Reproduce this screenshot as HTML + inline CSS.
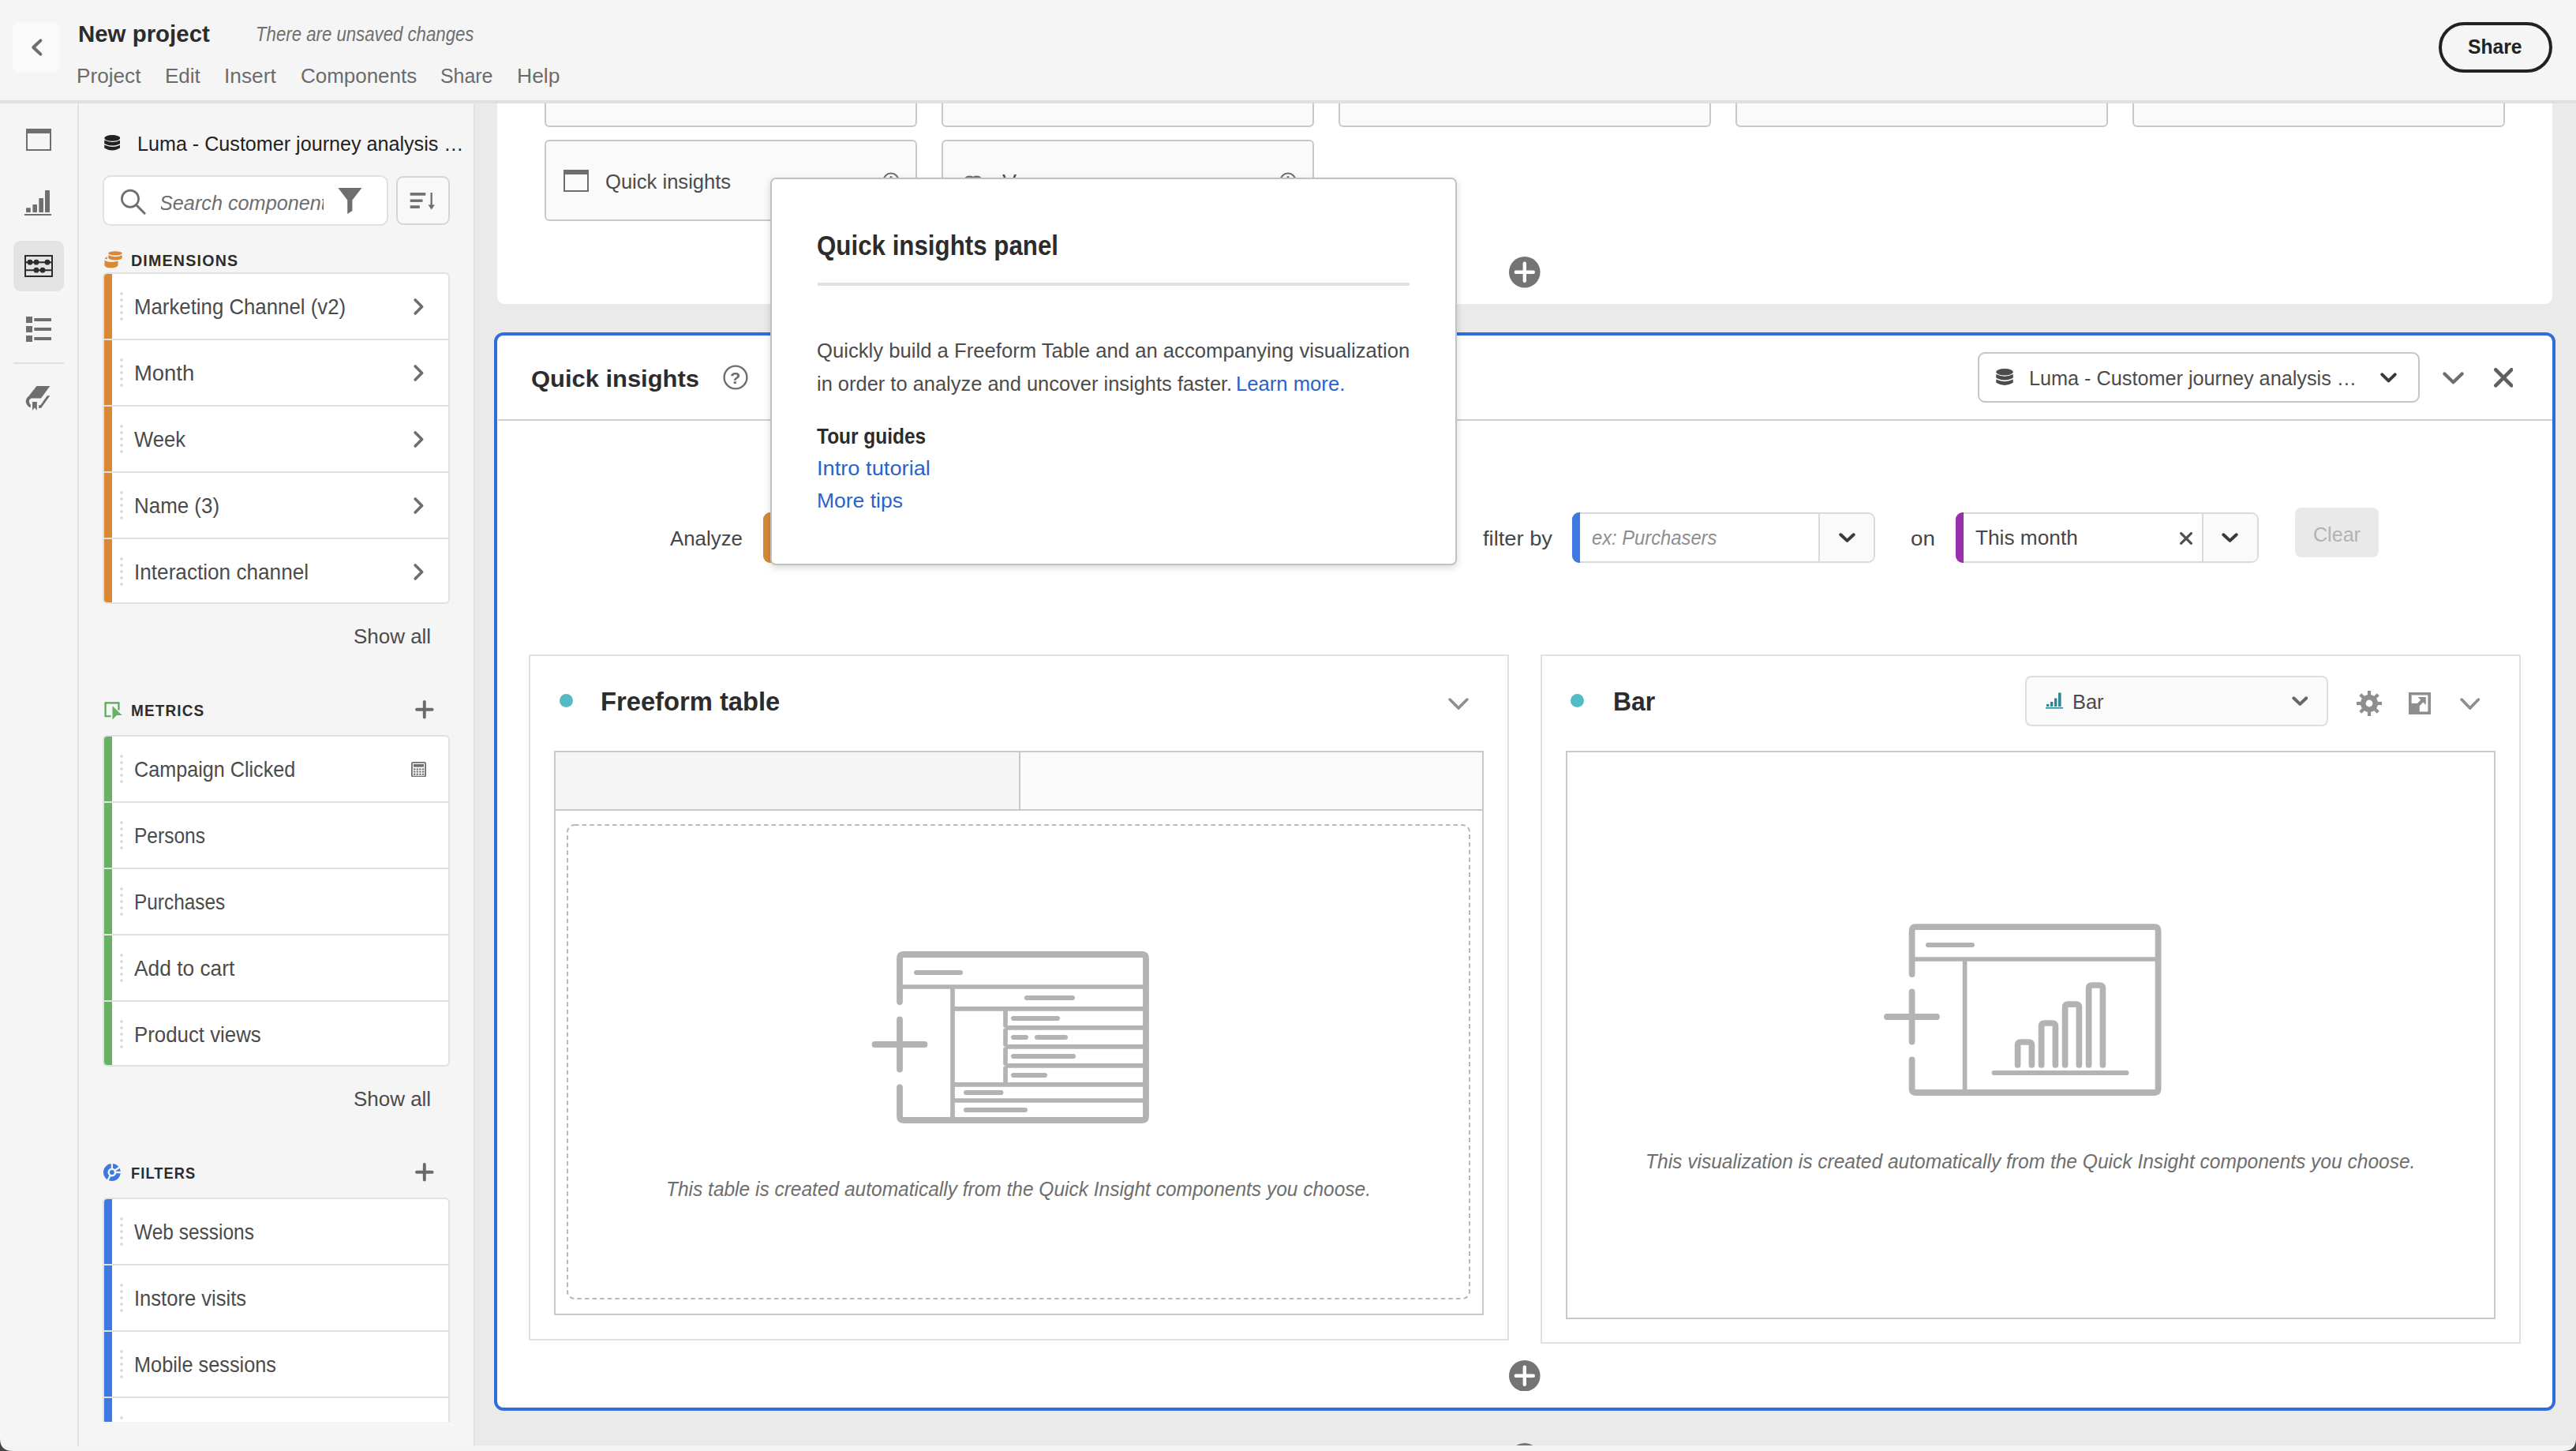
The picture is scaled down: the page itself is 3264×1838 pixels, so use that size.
<!DOCTYPE html>
<html><head><meta charset="utf-8"><title>New project</title><style>
html,body{margin:0;padding:0;}
body{width:3264px;height:1838px;overflow:hidden;background:#f5f5f5;font-family:'Liberation Sans', sans-serif;position:relative;}
#root{position:absolute;left:0;top:0;width:3264px;height:1838px;overflow:hidden;}
#root div,#root span.t,#root svg{position:absolute;box-sizing:border-box;}
span.t{white-space:nowrap;transform-origin:0 0;display:block;}

</style></head><body><div id="root">
<div style="left:601px;top:131px;width:2663px;height:1700px;background:#eaeaea;"></div>
<div style="left:630px;top:100px;width:2604px;height:284.5px;background:#fff;border-radius:0 0 9px 9px;"></div>
<div style="left:690px;top:60px;width:472px;height:101px;background:#fafafa;border:2px solid #c8c8c8;border-radius:6px;"></div>
<div style="left:1193px;top:60px;width:472px;height:101px;background:#fafafa;border:2px solid #c8c8c8;border-radius:6px;"></div>
<div style="left:1696px;top:60px;width:472px;height:101px;background:#fafafa;border:2px solid #c8c8c8;border-radius:6px;"></div>
<div style="left:2199px;top:60px;width:472px;height:101px;background:#fafafa;border:2px solid #c8c8c8;border-radius:6px;"></div>
<div style="left:2702px;top:60px;width:472px;height:101px;background:#fafafa;border:2px solid #c8c8c8;border-radius:6px;"></div>
<div style="left:690px;top:177px;width:472px;height:103.4px;background:#fafafa;border:2px solid #c8c8c8;border-radius:6px;"></div>
<div style="left:1193px;top:177px;width:472px;height:103.4px;background:#fafafa;border:2px solid #c8c8c8;border-radius:6px;"></div>
<svg style="left:714px;top:215px;" width="32" height="28" viewBox="0 0 32 28"><rect x="1" y="1" width="30" height="26" fill="none" stroke="#6e6e6e" stroke-width="2"/><rect x="0" y="0" width="32" height="6" fill="#6e6e6e"/></svg>
<span class="t" style="left:766.88px;top:215px;font-size:25.8px;line-height:31px;color:#4b4b4b;transform:scaleX(0.9911);">Quick insights</span>
<svg style="left:1118px;top:218px;" width="22" height="22" viewBox="0 0 22 22"><circle cx="11" cy="11" r="9.5" fill="none" stroke="#6e6e6e" stroke-width="2"/><rect x="10" y="9.5" width="2" height="7" fill="#6e6e6e"/><circle cx="11" cy="6.3" r="1.4" fill="#6e6e6e"/></svg>
<svg style="left:1620.7px;top:218px;" width="22" height="22" viewBox="0 0 22 22"><circle cx="11" cy="11" r="9.5" fill="none" stroke="#6e6e6e" stroke-width="2"/><rect x="10" y="9.5" width="2" height="7" fill="#6e6e6e"/><circle cx="11" cy="6.3" r="1.4" fill="#6e6e6e"/></svg>
<svg style="left:1220px;top:222px;" width="26" height="18" viewBox="0 0 26 18"><circle cx="8.5" cy="9" r="7.3" fill="none" stroke="#6e6e6e" stroke-width="2.2"/><circle cx="17.5" cy="9" r="7.3" fill="none" stroke="#6e6e6e" stroke-width="2.2"/></svg>
<span class="t" style="left:1269.58px;top:215px;font-size:25.8px;line-height:31px;color:#4b4b4b;transform:scaleX(1.0446);">Venn</span>
<svg style="left:1912.2px;top:325.2px;" width="39.6" height="39.6" viewBox="0 0 39.6 39.6"><circle cx="19.8" cy="19.8" r="19.8" fill="#747474"/><path d="M8.8 19.8H30.8M19.8 8.8V30.8" stroke="#fff" stroke-width="4.4" stroke-linecap="round"/></svg>
<div style="left:626px;top:421px;width:2612px;height:1366px;background:#fff;border:4px solid #2f6ddd;border-radius:12px;"></div>
<div style="left:631px;top:530.6px;width:2603px;height:2px;background:#cfcfcf;"></div>
<span class="t" style="left:673.13px;top:462px;font-size:30.3px;line-height:36px;color:#2c2c2c;font-weight:700;transform:scaleX(1.0198);">Quick insights</span>
<svg style="left:916px;top:462.4px;" width="32" height="32" viewBox="0 0 32 32"><circle cx="16" cy="16" r="14.4" fill="none" stroke="#6e6e6e" stroke-width="2.4"/></svg>
<span class="t" style="left:925.09px;top:467px;font-size:20.1px;line-height:24px;color:#6e6e6e;font-weight:700;transform:scaleX(1.0841);">?</span>
<div style="left:2506px;top:446px;width:560px;height:64px;background:#fff;border:2px solid #c6c6c6;border-radius:9px;"></div>
<svg style="left:2528.8px;top:467.3px;" width="22" height="21.5" viewBox="0 0 20 20"><ellipse cx="10" cy="3.9" rx="10" ry="3.9" fill="#4b4b4b"/><path d="M0 6.6 Q10 11.4 20 6.6 V11 Q10 16.2 0 11Z" fill="#4b4b4b"/><path d="M0 12.6 Q10 17.4 20 12.6 V16.4 Q10 22.6 0 16.4Z" fill="#4b4b4b"/></svg>
<span class="t" style="left:2570.55px;top:463px;font-size:26.4px;line-height:32px;color:#4b4b4b;transform:scaleX(0.9559);">Luma - Customer journey analysis …</span>
<svg style="left:3015.5px;top:472px;" width="21" height="13" viewBox="0 0 21 13"><path d="M2.3 2.3 L10.5 10.4 L18.7 2.3" fill="none" stroke="#3a3a3a" stroke-width="4" stroke-linecap="round" stroke-linejoin="round"/></svg>
<svg style="left:3094.6px;top:471.2px;" width="27" height="16" viewBox="0 0 27 16"><path d="M2.4 2.4 L13.5 13.3 L24.599999999999998 2.4" fill="none" stroke="#6e6e6e" stroke-width="4.2" stroke-linecap="round" stroke-linejoin="round"/></svg>
<svg style="left:3159.6px;top:466.2px;" width="24.6" height="24.6" viewBox="0 0 24.6 24.6"><path d="M2.3 2.3L22.3 22.3M22.3 2.3L2.3 22.3" stroke="#5f5f5f" stroke-width="4.6" stroke-linecap="round"/></svg>
<span class="t" style="left:848.97px;top:667px;font-size:26.0px;line-height:31px;color:#464646;transform:scaleX(0.9943);">Analyze</span>
<div style="left:967.3px;top:649.3px;width:400px;height:63.5px;background:#fff;border:2px solid #dadada;border-radius:9px;"></div>
<div style="left:967.3px;top:649.3px;width:12px;height:63.5px;background:#d98936;border-radius:9px 0 0 9px;"></div>
<span class="t" style="left:1879.07px;top:667px;font-size:26.0px;line-height:31px;color:#464646;transform:scaleX(1.0496);">filter by</span>
<div style="left:1992px;top:649.3px;width:383.5px;height:63.5px;background:#fff;border:2px solid #dadada;border-radius:9px;"></div>
<div style="left:1992px;top:649.3px;width:10px;height:63.5px;background:#3d79e0;border-radius:9px 0 0 9px;"></div>
<div style="left:2304px;top:651.3px;width:69.5px;height:59.5px;background:#fafafa;border-left:2px solid #dadada;border-radius:0 7px 7px 0;"></div>
<span class="t" style="left:2016.61px;top:666px;font-size:25.3px;line-height:30px;color:#8e8e8e;font-style:italic;transform:scaleX(0.9389);">ex: Purchasers</span>
<svg style="left:2329.5px;top:675.3px;" width="21" height="12.5" viewBox="0 0 21 12.5"><path d="M2.3 2.3 L10.5 9.9 L18.7 2.3" fill="none" stroke="#3a3a3a" stroke-width="4" stroke-linecap="round" stroke-linejoin="round"/></svg>
<span class="t" style="left:2420.87px;top:667px;font-size:26.0px;line-height:31px;color:#464646;transform:scaleX(1.0674);">on</span>
<div style="left:2478px;top:649.3px;width:383.5px;height:63.5px;background:#fff;border:2px solid #dadada;border-radius:9px;"></div>
<div style="left:2478px;top:649.3px;width:10px;height:63.5px;background:#9830ad;border-radius:9px 0 0 9px;"></div>
<div style="left:2790px;top:651.3px;width:69.5px;height:59.5px;background:#fafafa;border-left:2px solid #dadada;border-radius:0 7px 7px 0;"></div>
<span class="t" style="left:2503.27px;top:666px;font-size:26.0px;line-height:31px;color:#464646;transform:scaleX(1.0090);">This month</span>
<svg style="left:2761.6px;top:673.8px;" width="16" height="16" viewBox="0 0 16 16"><path d="M1.6 1.6L14.4 14.4M14.4 1.6L1.6 14.4" stroke="#505050" stroke-width="3.2" stroke-linecap="round"/></svg>
<svg style="left:2815.3px;top:675.3px;" width="21" height="12.5" viewBox="0 0 21 12.5"><path d="M2.3 2.3 L10.5 9.9 L18.7 2.3" fill="none" stroke="#3a3a3a" stroke-width="4" stroke-linecap="round" stroke-linejoin="round"/></svg>
<div style="left:2908px;top:643.2px;width:106px;height:63.2px;background:#e9e9e9;border-radius:8px;"></div>
<span class="t" style="left:2930.57px;top:662px;font-size:26.0px;line-height:31px;color:#b3b3b3;transform:scaleX(0.9651);">Clear</span>
<div style="left:670px;top:829px;width:1241.7px;height:869px;background:#fff;border:2px solid #e1e1e1;"></div>
<div style="left:708.8px;top:878.8px;width:17px;height:17px;background:#53bbc4;border-radius:50%;"></div>
<span class="t" style="left:761.05px;top:869px;font-size:33.6px;line-height:40px;color:#2c2c2c;font-weight:700;transform:scaleX(0.9745);">Freeform table</span>
<svg style="left:1835px;top:884px;" width="26" height="15.5" viewBox="0 0 26 15.5"><path d="M2.1 2.1 L13.0 13.1 L23.9 2.1" fill="none" stroke="#8e8e8e" stroke-width="3.6" stroke-linecap="round" stroke-linejoin="round"/></svg>
<div style="left:702px;top:951px;width:1177.6px;height:715.2px;background:#fff;border:2px solid #c9c9c9;"></div>
<div style="left:704px;top:953px;width:587.5px;height:72.2px;background:#f5f5f5;"></div>
<div style="left:1293px;top:953px;width:584.6px;height:72.2px;background:#fafafa;"></div>
<div style="left:1291.2px;top:953px;width:2px;height:72.2px;background:#c9c9c9;"></div>
<div style="left:704px;top:1025px;width:1173.6px;height:2px;background:#c9c9c9;"></div>
<svg style="left:718px;top:1044.4px;" width="1145" height="602" viewBox="0 0 1145 602"><rect x="1" y="1" width="1143" height="600" rx="9" fill="none" stroke="#b8b8b8" stroke-width="2" stroke-dasharray="5.6 4"/></svg>
<span class="t" style="left:843.59px;top:1491px;font-size:25.6px;line-height:31px;color:#6e6e6e;font-style:italic;transform:scaleX(0.9569);">This table is created automatically from the Quick Insight components you choose.</span>
<div style="left:1952.2px;top:829px;width:1241.6px;height:873px;background:#fff;border:2px solid #e1e1e1;"></div>
<div style="left:1990.4px;top:879.2px;width:17px;height:17px;background:#53bbc4;border-radius:50%;"></div>
<span class="t" style="left:2044.15px;top:869px;font-size:33.6px;line-height:40px;color:#2c2c2c;font-weight:700;transform:scaleX(0.9499);">Bar</span>
<div style="left:2566px;top:856px;width:383.6px;height:63.8px;background:#fafafa;border:2px solid #dedede;border-radius:8px;"></div>
<svg style="left:2592px;top:877.4px;" width="22" height="21" viewBox="0 0 22 21"><g fill="#2f8793"><rect x="1" y="15" width="3.4" height="3"/><rect x="6" y="12" width="3.4" height="6"/><rect x="11" y="7.5" width="3.4" height="10.5"/><rect x="16" y="0.5" width="3.6" height="17.5"/><rect x="0" y="19" width="22" height="1.6"/></g></svg>
<span class="t" style="left:2625.97px;top:874px;font-size:26.0px;line-height:31px;color:#4b4b4b;transform:scaleX(0.9778);">Bar</span>
<svg style="left:2903.6px;top:882px;" width="20.6" height="12.5" viewBox="0 0 20.6 12.5"><path d="M2.3 2.3 L10.3 9.9 L18.3 2.3" fill="none" stroke="#666" stroke-width="4" stroke-linecap="round" stroke-linejoin="round"/></svg>
<svg style="left:3117.3px;top:884px;" width="25.5" height="15.5" viewBox="0 0 25.5 15.5"><path d="M2.1 2.1 L12.75 13.1 L23.4 2.1" fill="none" stroke="#8e8e8e" stroke-width="3.6" stroke-linecap="round" stroke-linejoin="round"/></svg>
<div style="left:1984px;top:951px;width:1178px;height:720px;background:#fff;border:2px solid #c9c9c9;"></div>
<span class="t" style="left:2084.59px;top:1456px;font-size:25.6px;line-height:31px;color:#6e6e6e;font-style:italic;transform:scaleX(0.9590);">This visualization is created automatically from the Quick Insight components you choose.</span>
<svg style="left:1912.2px;top:1722.9px;" width="39.6" height="39.6" viewBox="0 0 39.6 39.6"><circle cx="19.8" cy="19.8" r="19.8" fill="#747474"/><path d="M8.8 19.8H30.8M19.8 8.8V30.8" stroke="#fff" stroke-width="4.4" stroke-linecap="round"/></svg>
<svg style="left:1912.2px;top:1828.2px;" width="39.6" height="39.6" viewBox="0 0 39.6 39.6"><circle cx="19.8" cy="19.8" r="19.8" fill="#747474"/><path d="M8.8 19.8H30.8M19.8 8.8V30.8" stroke="#fff" stroke-width="4.4" stroke-linecap="round"/></svg>
<svg style="left:2985px;top:874px;" width="34" height="34" viewBox="0 0 34 34"><g transform="translate(17 17)" fill="#8e8e8e"><rect x="-2.1" y="-16" width="4.2" height="8" transform="rotate(0)"/><rect x="-2.1" y="-16" width="4.2" height="8" transform="rotate(45)"/><rect x="-2.1" y="-16" width="4.2" height="8" transform="rotate(90)"/><rect x="-2.1" y="-16" width="4.2" height="8" transform="rotate(135)"/><rect x="-2.1" y="-16" width="4.2" height="8" transform="rotate(180)"/><rect x="-2.1" y="-16" width="4.2" height="8" transform="rotate(225)"/><rect x="-2.1" y="-16" width="4.2" height="8" transform="rotate(270)"/><rect x="-2.1" y="-16" width="4.2" height="8" transform="rotate(315)"/><path fill-rule="evenodd" d="M0 -11 A11 11 0 1 0 0 11 A11 11 0 1 0 0 -11 Z M0 -4.4 A4.4 4.4 0 1 1 0 4.4 A4.4 4.4 0 1 1 0 -4.4 Z"/></g></svg>
<svg style="left:3052px;top:877px;" width="28" height="28" viewBox="0 0 28 28"><g fill="#8e8e8e"><path fill-rule="evenodd" d="M0 0H28V28H0Z M3.6 3.6V24.4H24.4V3.6Z"/><rect x="0" y="14" width="13.8" height="14"/><path d="M11.6 6 H21.8 V16 L18.4 12.6 L12 19 L9 16 L15.2 9.6 Z"/></g></svg>
<svg style="left:1100px;top:1200px;" width="360" height="228" viewBox="0 0 360 228"><g fill="none" stroke="#b3b3b3" stroke-linecap="round" stroke-linejoin="round"><path stroke-width="7.8" d="M40 69 V14 Q40 9 45 9 H347 Q352 9 352 14 V214 Q352 219 347 219 H45 Q40 219 40 214 V177.5"/><path stroke-width="7.8" d="M40 91.5 V154.5 M8.5 123 H71.5"/><g stroke-width="5.7" stroke-linecap="butt"><path d="M40 50 H352 M107 50 V219 M107 77.8 H352 M107 173.9 H352 M107 194 H352"/><path d="M174 101.9 H352 M174 125.9 H352 M174 149.9 H352"/></g><path stroke-width="5.7" d="M174 80 V99 M174 105 V123 M174 129 V147 M174 153 V171"/><g stroke-width="6"><path d="M61 32 H117 M201 64 H259 M184 90 H240 M184 114 H200 M214 114 H250 M184 138 H260 M184 162 H224 M124 184 H168.5 M124 206 H199"/></g></g></svg>
<svg style="left:2380px;top:1160px;" width="362" height="232" viewBox="0 0 362 232"><g fill="none" stroke="#b3b3b3" stroke-linecap="round" stroke-linejoin="round"><path stroke-width="7.8" d="M42.6 74 V19.2 Q42.6 14.2 47.6 14.2 H349.6 Q354.6 14.2 354.6 19.2 V219 Q354.6 224 349.6 224 H47.6 Q42.6 224 42.6 219 V182.5"/><path stroke-width="7.8" d="M42.6 96.5 V159.5 M11 128 H74"/><path stroke-width="5.7" stroke-linecap="butt" d="M42.6 55 H354.6 M109.6 55 V224"/><path stroke-width="6" d="M63 37 H119 M146.5 199 H314.5"/><path stroke-width="7.7" d="M176.6 189 V164 Q176.6 160 180.6 160 H190.4 Q194.4 160 194.4 164 V189"/><path stroke-width="7.7" d="M206.6 189 V140 Q206.6 136 210.6 136 H220.4 Q224.4 136 224.4 140 V189"/><path stroke-width="7.7" d="M236.6 189 V116.2 Q236.6 112.2 240.6 112.2 H250.4 Q254.4 112.2 254.4 116.2 V189"/><path stroke-width="7.7" d="M266.6 189 V92 Q266.6 88 270.6 88 H280.40000000000003 Q284.40000000000003 88 284.40000000000003 92 V189"/></g></svg>
<div style="left:976px;top:225px;width:870.2px;height:491px;background:#fff;border:2px solid #c2c2c2;border-radius:7px;box-shadow:0 3px 10px rgba(0,0,0,0.16);"></div>
<span class="t" style="left:1035.38px;top:290px;font-size:35.0px;line-height:42px;color:#2c2c2c;font-weight:700;transform:scaleX(0.8940);">Quick insights panel</span>
<div style="left:1036.3px;top:358px;width:750px;height:4px;background:#e1e1e1;"></div>
<span class="t" style="left:1034.85px;top:428px;font-size:26.4px;line-height:32px;color:#4b4b4b;transform:scaleX(0.9723);">Quickly build a Freeform Table and an accompanying visualization</span>
<span class="t" style="left:1034.85px;top:470px;font-size:26.4px;line-height:32px;color:#4b4b4b;transform:scaleX(0.9642);">in order to analyze and uncover insights faster.</span>
<span class="t" style="left:1565.95px;top:470px;font-size:26.4px;line-height:32px;color:#2b62cc;transform:scaleX(0.9720);">Learn more.</span>
<span class="t" style="left:1034.83px;top:537px;font-size:26.8px;line-height:32px;color:#2c2c2c;font-weight:700;transform:scaleX(0.9133);">Tour guides</span>
<span class="t" style="left:1034.85px;top:577px;font-size:26.4px;line-height:32px;color:#2b62cc;transform:scaleX(1.0326);">Intro tutorial</span>
<span class="t" style="left:1034.85px;top:618px;font-size:26.4px;line-height:32px;color:#2b62cc;transform:scaleX(1.0035);">More tips</span>
<div style="left:0px;top:131px;width:601px;height:1700px;background:#f5f5f5;"></div>
<div style="left:98px;top:131px;width:2px;height:1700px;background:#e1e1e1;"></div>
<div style="left:599.5px;top:131px;width:2px;height:1700px;background:#e1e1e1;"></div>
<svg style="left:33px;top:163px;" width="32" height="28" viewBox="0 0 32 28"><rect x="1" y="1" width="30" height="26" fill="none" stroke="#6e6e6e" stroke-width="2"/><rect x="0" y="0" width="32" height="6" fill="#6e6e6e"/></svg>
<svg style="left:31px;top:241px;" width="34" height="32" viewBox="0 0 34 32"><g fill="#6e6e6e"><rect x="2" y="22.2" width="5.8" height="5.8" rx="0.8"/><rect x="10.4" y="18" width="5.6" height="10" rx="0.8"/><rect x="18.3" y="10" width="5.7" height="18" rx="0.8"/><rect x="26" y="0" width="6" height="28" rx="0.8"/><rect x="0" y="30" width="34" height="2"/></g></svg>
<div style="left:17px;top:305px;width:64px;height:64px;background:#e3e3e3;border-radius:9px;"></div>
<svg style="left:31px;top:323px;" width="36" height="28" viewBox="0 0 36 28"><rect x="1" y="1" width="34" height="26" fill="none" stroke="#2c2c2c" stroke-width="2"/><path d="M1 9.2H35M1 19.2H35" stroke="#2c2c2c" stroke-width="2"/><g fill="#2c2c2c"><circle cx="7" cy="9.2" r="3.4"/><circle cx="15" cy="9.2" r="3.4"/><circle cx="29" cy="9.2" r="3.4"/><circle cx="15" cy="19.2" r="3.4"/><circle cx="23" cy="19.2" r="3.4"/></g></svg>
<svg style="left:33px;top:401px;" width="32" height="32" viewBox="0 0 32 32"><g fill="#6e6e6e"><rect x="0" y="0" width="8" height="8"/><rect x="0" y="12" width="8" height="8"/><rect x="0" y="24" width="8" height="8"/><rect x="10.3" y="2" width="21.7" height="4"/><rect x="10.3" y="14" width="21.7" height="4"/><rect x="10.3" y="26" width="21.7" height="4"/></g></svg>
<div style="left:17px;top:459px;width:64px;height:2px;background:#e1e1e1;"></div>
<svg style="left:32px;top:488px;" width="33" height="33" viewBox="0 0 33 33"><g fill="#6e6e6e"><path d="M14.4 1 H31.3 L20 16.6 H8 Q4.9 17.5 4.9 20.5 Q4.9 23 6.8 24.2 V28.3 Q2.4 27 0.8 21.4 Q0.2 17.4 4.4 13.8 Z"/><path d="M9 21 H14.8 V32 L11.8 28.3 L9 32 Z"/><path d="M17.2 25.2 H19.3 L27.8 13.3 H31.3 L20 28.9 H17.2 Z"/></g></svg>
<svg style="left:131.8px;top:171px;" width="20.5" height="20" viewBox="0 0 20 20"><ellipse cx="10" cy="3.9" rx="10" ry="3.9" fill="#222"/><path d="M0 6.6 Q10 11.4 20 6.6 V11 Q10 16.2 0 11Z" fill="#222"/><path d="M0 12.6 Q10 17.4 20 12.6 V16.4 Q10 22.6 0 16.4Z" fill="#222"/></svg>
<span class="t" style="left:173.59px;top:167px;font-size:25.6px;line-height:31px;color:#222;transform:scaleX(0.9819);">Luma - Customer journey analysis …</span>
<div style="left:130.4px;top:222.2px;width:361.4px;height:63.6px;background:#fff;border:2px solid #e1e1e1;border-radius:10px;"></div>
<svg style="left:151px;top:239px;" width="35" height="34" viewBox="0 0 35 34"><circle cx="14" cy="12.8" r="10.6" fill="none" stroke="#6e6e6e" stroke-width="2.7"/><path d="M21.6 20.6 L32.2 31.2" stroke="#6e6e6e" stroke-width="2.9" stroke-linecap="round"/></svg>
<div style="left:203.7px;top:235px;width:206.5px;height:40px;overflow:hidden;background:#fff;"></div>
<div style="left:203.7px;top:235px;width:206.3px;height:42px;overflow:hidden;">
<span class="t" style="left:-1.42px;top:7px;font-size:25.8px;line-height:31px;color:#6e6e6e;font-style:italic;transform:scaleX(0.9782);">Search components</span>
</div>
<svg style="left:427.5px;top:238px;" width="31" height="33.5" viewBox="0 0 31 33.5"><path d="M0.4 0 H30.4 L18.4 15.6 V29 L12.2 33 V15.6 Z" fill="#6e6e6e"/></svg>
<div style="left:502.2px;top:223px;width:67.6px;height:61.6px;background:#f8f8f8;border:2px solid #d5d5d5;border-radius:9px;"></div>
<svg style="left:519px;top:243px;" width="33" height="23" viewBox="0 0 33 23"><g fill="#6e6e6e"><rect x="0.7" y="1.1" width="19.5" height="3.6"/><rect x="0.7" y="9.5" width="15.8" height="3.4"/><rect x="0.7" y="17.3" width="12.1" height="3.6"/><rect x="26.5" y="1" width="2.3" height="18"/><path d="M23.5 16.4 H31.9 L27.7 22.4 Z"/></g></svg>
<svg style="left:131.5px;top:317.6px;" width="23.5" height="22" viewBox="0 0 23.5 22"><g fill="#d98936"><ellipse cx="14" cy="2.9" rx="8.7" ry="2.6"/><path d="M5.3 5.2 Q14 9.4 22.7 5.2 V8.8 Q21.5 11.4 14 11.5 Q6.6 11.4 5.3 8.8 Z"/><path d="M0.5 9.2 L3.5 6.9 L4 10.6 Q1.6 10.2 0.5 9.2Z"/><path d="M0.5 11.2 Q3 13.8 9 13.9 Q14.4 13.9 17.5 12.6 V18.4 Q15 21.3 9 21.3 Q2 21.3 0.5 18.4 Z"/></g></svg>
<span class="t" style="left:165.9px;top:318px;font-size:20.0px;line-height:24px;color:#2c2c2c;font-weight:700;letter-spacing:1.2px;transform:scaleX(0.9828);">DIMENSIONS</span>
<div style="left:130.2px;top:345px;width:439.8px;height:419.6px;background:#fff;border:2px solid #e1e1e1;border-radius:6px;overflow:hidden;">
<div style="left:0px;top:0px;width:9.9px;height:2000px;background:#d98936;"></div>
<div style="left:0px;top:82.3px;width:440px;height:2px;background:#e1e1e1;"></div>
<div style="left:0px;top:166.23px;width:440px;height:2px;background:#e1e1e1;"></div>
<div style="left:0px;top:250.16px;width:440px;height:2px;background:#e1e1e1;"></div>
<div style="left:0px;top:334.09px;width:440px;height:2px;background:#e1e1e1;"></div>
</div>
<span class="t" style="left:169.52px;top:373px;font-size:26.9px;line-height:32px;color:#4b4b4b;transform:scaleX(0.9591);">Marketing Channel (v2)</span>
<svg style="left:152px;top:370.1px;" width="4" height="36" viewBox="0 0 4 36"><circle cx="2" cy="2" r="1.95" fill="#dcdcdc"/><circle cx="2" cy="10" r="1.95" fill="#dcdcdc"/><circle cx="2" cy="18" r="1.95" fill="#dcdcdc"/><circle cx="2" cy="26" r="1.95" fill="#dcdcdc"/><circle cx="2" cy="34" r="1.95" fill="#dcdcdc"/></svg>
<svg style="left:523.5px;top:377.8px;" width="13" height="21" viewBox="0 0 13 21"><path d="M2.2 2 L10.6 10.5 L2.2 19" fill="none" stroke="#6e6e6e" stroke-width="3.6" stroke-linecap="round" stroke-linejoin="round"/></svg>
<span class="t" style="left:169.52px;top:457px;font-size:26.9px;line-height:32px;color:#4b4b4b;transform:scaleX(1.0201);">Month</span>
<svg style="left:152px;top:454.03px;" width="4" height="36" viewBox="0 0 4 36"><circle cx="2" cy="2" r="1.95" fill="#dcdcdc"/><circle cx="2" cy="10" r="1.95" fill="#dcdcdc"/><circle cx="2" cy="18" r="1.95" fill="#dcdcdc"/><circle cx="2" cy="26" r="1.95" fill="#dcdcdc"/><circle cx="2" cy="34" r="1.95" fill="#dcdcdc"/></svg>
<svg style="left:523.5px;top:461.73px;" width="13" height="21" viewBox="0 0 13 21"><path d="M2.2 2 L10.6 10.5 L2.2 19" fill="none" stroke="#6e6e6e" stroke-width="3.6" stroke-linecap="round" stroke-linejoin="round"/></svg>
<span class="t" style="left:169.52px;top:541px;font-size:26.9px;line-height:32px;color:#4b4b4b;transform:scaleX(0.9530);">Week</span>
<svg style="left:152px;top:537.96px;" width="4" height="36" viewBox="0 0 4 36"><circle cx="2" cy="2" r="1.95" fill="#dcdcdc"/><circle cx="2" cy="10" r="1.95" fill="#dcdcdc"/><circle cx="2" cy="18" r="1.95" fill="#dcdcdc"/><circle cx="2" cy="26" r="1.95" fill="#dcdcdc"/><circle cx="2" cy="34" r="1.95" fill="#dcdcdc"/></svg>
<svg style="left:523.5px;top:545.66px;" width="13" height="21" viewBox="0 0 13 21"><path d="M2.2 2 L10.6 10.5 L2.2 19" fill="none" stroke="#6e6e6e" stroke-width="3.6" stroke-linecap="round" stroke-linejoin="round"/></svg>
<span class="t" style="left:169.52px;top:625px;font-size:26.9px;line-height:32px;color:#4b4b4b;transform:scaleX(0.9641);">Name (3)</span>
<svg style="left:152px;top:621.89px;" width="4" height="36" viewBox="0 0 4 36"><circle cx="2" cy="2" r="1.95" fill="#dcdcdc"/><circle cx="2" cy="10" r="1.95" fill="#dcdcdc"/><circle cx="2" cy="18" r="1.95" fill="#dcdcdc"/><circle cx="2" cy="26" r="1.95" fill="#dcdcdc"/><circle cx="2" cy="34" r="1.95" fill="#dcdcdc"/></svg>
<svg style="left:523.5px;top:629.59px;" width="13" height="21" viewBox="0 0 13 21"><path d="M2.2 2 L10.6 10.5 L2.2 19" fill="none" stroke="#6e6e6e" stroke-width="3.6" stroke-linecap="round" stroke-linejoin="round"/></svg>
<span class="t" style="left:169.52px;top:709px;font-size:26.9px;line-height:32px;color:#4b4b4b;transform:scaleX(0.9728);">Interaction channel</span>
<svg style="left:152px;top:705.82px;" width="4" height="36" viewBox="0 0 4 36"><circle cx="2" cy="2" r="1.95" fill="#dcdcdc"/><circle cx="2" cy="10" r="1.95" fill="#dcdcdc"/><circle cx="2" cy="18" r="1.95" fill="#dcdcdc"/><circle cx="2" cy="26" r="1.95" fill="#dcdcdc"/><circle cx="2" cy="34" r="1.95" fill="#dcdcdc"/></svg>
<svg style="left:523.5px;top:713.52px;" width="13" height="21" viewBox="0 0 13 21"><path d="M2.2 2 L10.6 10.5 L2.2 19" fill="none" stroke="#6e6e6e" stroke-width="3.6" stroke-linecap="round" stroke-linejoin="round"/></svg>
<span class="t" style="left:448.23px;top:790px;font-size:26.7px;line-height:32px;color:#4b4b4b;transform:scaleX(0.9729);">Show all</span>
<svg style="left:131.5px;top:888.6px;" width="24" height="23.4" viewBox="0 0 24 23.4"><path d="M18.45 10.4 V1.45 H1.55 V18.25 H8.5" fill="none" stroke="#57a853" stroke-width="2.2"/><path d="M10.5 5.2 L22.8 17 L15.8 17.1 L10.5 22.5 Z" fill="#66b262"/></svg>
<span class="t" style="left:165.9px;top:888px;font-size:20.0px;line-height:24px;color:#2c2c2c;font-weight:700;letter-spacing:1.2px;transform:scaleX(0.9481);">METRICS</span>
<svg style="left:526px;top:887px;" width="23.6" height="23.6" viewBox="0 0 23.6 23.6"><path d="M2 11.8H21.6M11.8 2V21.6" stroke="#6a6a6a" stroke-width="3.9" stroke-linecap="round"/></svg>
<div style="left:130.2px;top:931px;width:439.8px;height:419.6px;background:#fff;border:2px solid #e1e1e1;border-radius:6px;overflow:hidden;">
<div style="left:0px;top:0px;width:9.9px;height:2000px;background:#66b262;"></div>
<div style="left:0px;top:82.3px;width:440px;height:2px;background:#e1e1e1;"></div>
<div style="left:0px;top:166.23px;width:440px;height:2px;background:#e1e1e1;"></div>
<div style="left:0px;top:250.16px;width:440px;height:2px;background:#e1e1e1;"></div>
<div style="left:0px;top:334.09px;width:440px;height:2px;background:#e1e1e1;"></div>
</div>
<span class="t" style="left:169.52px;top:959px;font-size:26.9px;line-height:32px;color:#4b4b4b;transform:scaleX(0.9360);">Campaign Clicked</span>
<svg style="left:152px;top:956.1px;" width="4" height="36" viewBox="0 0 4 36"><circle cx="2" cy="2" r="1.95" fill="#dcdcdc"/><circle cx="2" cy="10" r="1.95" fill="#dcdcdc"/><circle cx="2" cy="18" r="1.95" fill="#dcdcdc"/><circle cx="2" cy="26" r="1.95" fill="#dcdcdc"/><circle cx="2" cy="34" r="1.95" fill="#dcdcdc"/></svg>
<span class="t" style="left:169.52px;top:1043px;font-size:26.9px;line-height:32px;color:#4b4b4b;transform:scaleX(0.9118);">Persons</span>
<svg style="left:152px;top:1040.03px;" width="4" height="36" viewBox="0 0 4 36"><circle cx="2" cy="2" r="1.95" fill="#dcdcdc"/><circle cx="2" cy="10" r="1.95" fill="#dcdcdc"/><circle cx="2" cy="18" r="1.95" fill="#dcdcdc"/><circle cx="2" cy="26" r="1.95" fill="#dcdcdc"/><circle cx="2" cy="34" r="1.95" fill="#dcdcdc"/></svg>
<span class="t" style="left:169.52px;top:1127px;font-size:26.9px;line-height:32px;color:#4b4b4b;transform:scaleX(0.9071);">Purchases</span>
<svg style="left:152px;top:1123.96px;" width="4" height="36" viewBox="0 0 4 36"><circle cx="2" cy="2" r="1.95" fill="#dcdcdc"/><circle cx="2" cy="10" r="1.95" fill="#dcdcdc"/><circle cx="2" cy="18" r="1.95" fill="#dcdcdc"/><circle cx="2" cy="26" r="1.95" fill="#dcdcdc"/><circle cx="2" cy="34" r="1.95" fill="#dcdcdc"/></svg>
<span class="t" style="left:169.52px;top:1211px;font-size:26.9px;line-height:32px;color:#4b4b4b;transform:scaleX(0.9785);">Add to cart</span>
<svg style="left:152px;top:1207.89px;" width="4" height="36" viewBox="0 0 4 36"><circle cx="2" cy="2" r="1.95" fill="#dcdcdc"/><circle cx="2" cy="10" r="1.95" fill="#dcdcdc"/><circle cx="2" cy="18" r="1.95" fill="#dcdcdc"/><circle cx="2" cy="26" r="1.95" fill="#dcdcdc"/><circle cx="2" cy="34" r="1.95" fill="#dcdcdc"/></svg>
<span class="t" style="left:169.52px;top:1295px;font-size:26.9px;line-height:32px;color:#4b4b4b;transform:scaleX(0.9604);">Product views</span>
<svg style="left:152px;top:1291.82px;" width="4" height="36" viewBox="0 0 4 36"><circle cx="2" cy="2" r="1.95" fill="#dcdcdc"/><circle cx="2" cy="10" r="1.95" fill="#dcdcdc"/><circle cx="2" cy="18" r="1.95" fill="#dcdcdc"/><circle cx="2" cy="26" r="1.95" fill="#dcdcdc"/><circle cx="2" cy="34" r="1.95" fill="#dcdcdc"/></svg>
<svg style="left:520.5px;top:964.6px;" width="19" height="19.6" viewBox="0 0 19 19.6"><rect x="0.9" y="0.9" width="17.2" height="17.8" rx="1.4" fill="none" stroke="#6e6e6e" stroke-width="1.8"/><rect x="3" y="3" width="13" height="3.6" fill="#6e6e6e"/><g fill="#6e6e6e"><rect x="3.0" y="8.4" width="2.4" height="2"/><rect x="6.6" y="8.4" width="2.4" height="2"/><rect x="10.2" y="8.4" width="2.4" height="2"/><rect x="13.8" y="8.4" width="2.4" height="2"/><rect x="3.0" y="11.600000000000001" width="2.4" height="2"/><rect x="6.6" y="11.600000000000001" width="2.4" height="2"/><rect x="10.2" y="11.600000000000001" width="2.4" height="2"/><rect x="13.8" y="11.600000000000001" width="2.4" height="2"/><rect x="3.0" y="14.8" width="2.4" height="2"/><rect x="6.6" y="14.8" width="2.4" height="2"/><rect x="10.2" y="14.8" width="2.4" height="2"/><rect x="13.8" y="14.8" width="2.4" height="2"/></g></svg>
<span class="t" style="left:448.23px;top:1376px;font-size:26.7px;line-height:32px;color:#4b4b4b;transform:scaleX(0.9729);">Show all</span>
<svg style="left:131px;top:1474px;" width="22.4" height="22.4" viewBox="0 0 22.4 22.4"><circle cx="10.9" cy="11" r="8.1" fill="none" stroke="#3d79e0" stroke-width="5.6"/><path d="M10.9 11 L10.9 -2 M10.9 11 L24 11 M10.9 11 L21.7 3.7 M10.9 11 L4.8 22.5" stroke="#f5f5f5" stroke-width="2.3" fill="none"/><circle cx="10.9" cy="11" r="5.2" fill="#f5f5f5"/><circle cx="10.9" cy="11" r="2.9" fill="#3d79e0"/></svg>
<span class="t" style="left:165.9px;top:1474px;font-size:20.0px;line-height:24px;color:#2c2c2c;font-weight:700;letter-spacing:1.2px;transform:scaleX(0.9130);">FILTERS</span>
<svg style="left:526px;top:1473.4px;" width="23.6" height="23.6" viewBox="0 0 23.6 23.6"><path d="M2 11.8H21.6M11.8 2V21.6" stroke="#6a6a6a" stroke-width="3.9" stroke-linecap="round"/></svg>
<div style="left:130.2px;top:1517px;width:439.8px;height:284.2px;background:#fff;border:2px solid #e1e1e1;border-radius:6px 6px 0 0;overflow:hidden;border-bottom:none;">
<div style="left:0px;top:0px;width:9.9px;height:2000px;background:#3d79e0;"></div>
<div style="left:0px;top:82.3px;width:440px;height:2px;background:#e1e1e1;"></div>
<div style="left:0px;top:166.23px;width:440px;height:2px;background:#e1e1e1;"></div>
<div style="left:0px;top:250.16px;width:440px;height:2px;background:#e1e1e1;"></div>
</div>
<span class="t" style="left:169.52px;top:1545px;font-size:26.9px;line-height:32px;color:#4b4b4b;transform:scaleX(0.9104);">Web sessions</span>
<svg style="left:152px;top:1542.1px;" width="4" height="36" viewBox="0 0 4 36"><circle cx="2" cy="2" r="1.95" fill="#dcdcdc"/><circle cx="2" cy="10" r="1.95" fill="#dcdcdc"/><circle cx="2" cy="18" r="1.95" fill="#dcdcdc"/><circle cx="2" cy="26" r="1.95" fill="#dcdcdc"/><circle cx="2" cy="34" r="1.95" fill="#dcdcdc"/></svg>
<span class="t" style="left:169.52px;top:1629px;font-size:26.9px;line-height:32px;color:#4b4b4b;transform:scaleX(0.9513);">Instore visits</span>
<svg style="left:152px;top:1626.03px;" width="4" height="36" viewBox="0 0 4 36"><circle cx="2" cy="2" r="1.95" fill="#dcdcdc"/><circle cx="2" cy="10" r="1.95" fill="#dcdcdc"/><circle cx="2" cy="18" r="1.95" fill="#dcdcdc"/><circle cx="2" cy="26" r="1.95" fill="#dcdcdc"/><circle cx="2" cy="34" r="1.95" fill="#dcdcdc"/></svg>
<span class="t" style="left:169.52px;top:1713px;font-size:26.9px;line-height:32px;color:#4b4b4b;transform:scaleX(0.9406);">Mobile sessions</span>
<svg style="left:152px;top:1709.96px;" width="4" height="36" viewBox="0 0 4 36"><circle cx="2" cy="2" r="1.95" fill="#dcdcdc"/><circle cx="2" cy="10" r="1.95" fill="#dcdcdc"/><circle cx="2" cy="18" r="1.95" fill="#dcdcdc"/><circle cx="2" cy="26" r="1.95" fill="#dcdcdc"/><circle cx="2" cy="34" r="1.95" fill="#dcdcdc"/></svg>
<svg style="left:152px;top:1793.89px;" width="4" height="6" viewBox="0 0 4 6"><circle cx="2" cy="2" r="1.9" fill="#dcdcdc"/></svg>
<div style="left:0px;top:0px;width:3264px;height:127.3px;background:#f5f5f5;"></div>
<div style="left:0px;top:127.3px;width:3264px;height:3.7px;background:#e0e0e0;"></div>
<div style="left:16px;top:28px;width:60px;height:64px;background:#fafafa;border-radius:9px;"></div>
<svg style="left:38px;top:48px;" width="18" height="24" viewBox="0 0 18 24"><path d="M13.4 3.4 L4.2 12 L13.4 20.6" fill="none" stroke="#6e6e6e" stroke-width="4" stroke-linecap="round" stroke-linejoin="round"/></svg>
<span class="t" style="left:99.03px;top:26px;font-size:28.6px;line-height:34px;color:#2c2c2c;font-weight:700;transform:scaleX(1.0292);">New project</span>
<span class="t" style="left:323.59px;top:28px;font-size:25.6px;line-height:31px;color:#6e6e6e;font-style:italic;transform:scaleX(0.8673);">There are unsaved changes</span>
<span class="t" style="left:97.16px;top:81px;font-size:26.1px;line-height:31px;color:#6b6b6b;transform:scaleX(1.0033);">Project</span>
<span class="t" style="left:209.26px;top:81px;font-size:26.1px;line-height:31px;color:#6b6b6b;transform:scaleX(0.9959);">Edit</span>
<span class="t" style="left:284.26px;top:81px;font-size:26.1px;line-height:31px;color:#6b6b6b;transform:scaleX(1.0079);">Insert</span>
<span class="t" style="left:380.56px;top:81px;font-size:26.1px;line-height:31px;color:#6b6b6b;transform:scaleX(0.9948);">Components</span>
<span class="t" style="left:557.56px;top:81px;font-size:26.1px;line-height:31px;color:#6b6b6b;transform:scaleX(0.9547);">Share</span>
<span class="t" style="left:654.56px;top:81px;font-size:26.1px;line-height:31px;color:#6b6b6b;transform:scaleX(1.0151);">Help</span>
<div style="left:3090px;top:27.7px;width:144.2px;height:64.3px;border:4.6px solid #222;border-radius:33px;"></div>
<span class="t" style="left:3127.48px;top:44px;font-size:25.8px;line-height:31px;color:#222;font-weight:700;transform:scaleX(0.9561);">Share</span>
<div style="left:0px;top:1830.5px;width:3264px;height:8px;background:#f3f3f3;"></div>
<svg style="left:0px;top:1822px;" width="16" height="16" viewBox="0 0 16 16"><path d="M0 0 Q0 16 16 16 H0 Z" fill="#444446"/></svg>
<svg style="left:3248px;top:1822px;" width="16" height="16" viewBox="0 0 16 16"><path d="M16 0 Q16 16 0 16 H16 Z" fill="#444446"/></svg>
</div></body></html>
